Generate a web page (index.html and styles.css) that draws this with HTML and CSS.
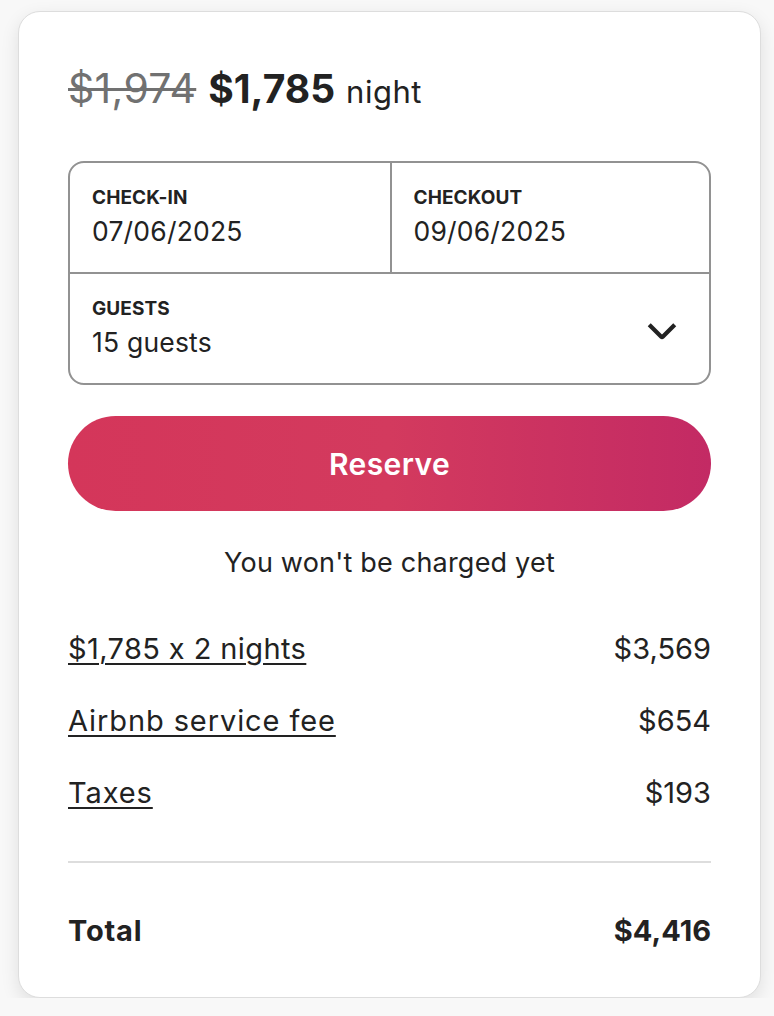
FILE: index.html
```html
<!DOCTYPE html>
<html lang="en">
<head>
<meta charset="utf-8">
<title>Reserve</title>
<link rel="stylesheet" href="styles.css">
</head>
<body>
<div class="card">
  <div class="price">
    <span class="old">$1,974</span>
    <span class="new">$1,785</span>
    <span class="per">night</span>
  </div>
  <div class="picker">
    <div class="dates">
      <div class="field">
        <div class="label">CHECK-IN</div>
        <div class="value">07/06/2025</div>
      </div>
      <div class="field field-right">
        <div class="label">CHECKOUT</div>
        <div class="value">09/06/2025</div>
      </div>
    </div>
    <div class="guests">
      <div class="field">
        <div class="label">GUESTS</div>
        <div class="value">15 guests</div>
      </div>
      <svg class="chev" viewBox="0 0 32 32" aria-hidden="true"><path d="M28 12 16.7 23.3a1 1 0 0 1-1.4 0L4 12" fill="none" stroke="#222" stroke-width="4"/></svg>
    </div>
  </div>
  <button class="reserve">Reserve</button>
  <div class="note">You won't be charged yet</div>
  <div class="rows">
    <div class="row"><a class="link link-tight">$1,785 x 2 nights</a><span>$3,569</span></div>
    <div class="row"><a class="link">Airbnb service fee</a><span>$654</span></div>
    <div class="row"><a class="link">Taxes</a><span>$193</span></div>
  </div>
  <div class="total"><span class="total-label">Total</span><span>$4,416</span></div>
</div>
</body>
</html>
```
FILE: styles.css
```css
html, body {
  margin: 0;
  padding: 0;
}
body {
  background: #f8f8f8;
  font-family: Inter, "Noto Sans", sans-serif;
  font-feature-settings: "calt" 0;
  color: #222222;
  padding: 11px 13px 0 18px;
}
.card {
  background: #ffffff;
  border: 1px solid #dddddd;
  border-radius: 22px;
  box-shadow: 0 6px 18px rgba(0, 0, 0, 0.10);
  padding: 46px 49px 0 49px;
  height: 939px;
}
.price {
  display: flex;
  align-items: baseline;
  gap: 12px;
  height: 57px;
  line-height: 60px;
}
.old {
  font-size: 41px;
  color: #717171;
  text-decoration: line-through;
  text-decoration-thickness: 3px;
  letter-spacing: 0.3px;
}
.new {
  font-size: 39px;
  font-weight: 700;
}
.per {
  font-size: 31px;
  letter-spacing: 0.5px;
  margin-left: -1px;
}
.picker {
  margin-top: 46px;
  border: 2px solid #929292;
  border-radius: 16px;
  overflow: hidden;
}
.dates {
  display: grid;
  grid-template-columns: 1fr 1fr;
  border-bottom: 2px solid #929292;
}
.field {
  padding: 24px 0 0 22px;
  height: 85px;
}
.field-right {
  border-left: 2px solid #929292;
}
.label {
  font-size: 19px;
  font-weight: 700;
  line-height: 22px;
  letter-spacing: 0.1px;
}
.value {
  font-size: 26.5px;
  line-height: 36px;
  margin-top: 4px;
  letter-spacing: 0.2px;
}
.guests {
  display: flex;
  justify-content: space-between;
  align-items: center;
}
.chev {
  width: 34px;
  height: 34px;
  margin-right: 30px;
}
.reserve {
  display: block;
  width: 100%;
  margin-top: 31px;
  height: 95px;
  border: none;
  border-radius: 48px;
  background: linear-gradient(to right, #d4365a, #d33a5e 50%, #c32a64);
  color: #ffffff;
  font-family: inherit;
  font-size: 30px;
  font-weight: 600;
  letter-spacing: 0.4px;
}
.note {
  text-align: center;
  font-size: 27px;
  margin-top: 34px;
  line-height: 36px;
  letter-spacing: 0.2px;
}
.rows {
  margin-top: 50px;
  display: flex;
  flex-direction: column;
  gap: 36px;
}
.row {
  display: flex;
  justify-content: space-between;
  font-size: 29px;
  line-height: 36px;
}
.link {
  text-decoration: underline;
  text-decoration-thickness: 2px;
  text-underline-offset: 4px;
  letter-spacing: 0.9px;
}
.link-tight {
  letter-spacing: 0.4px;
}
.total {
  margin-top: 50px;
  border-top: 2px solid #dddddd;
  padding-top: 50px;
  display: flex;
  justify-content: space-between;
  font-size: 29px;
  font-weight: 700;
  line-height: 36px;
}
.total-label {
  letter-spacing: 0.8px;
}
```
